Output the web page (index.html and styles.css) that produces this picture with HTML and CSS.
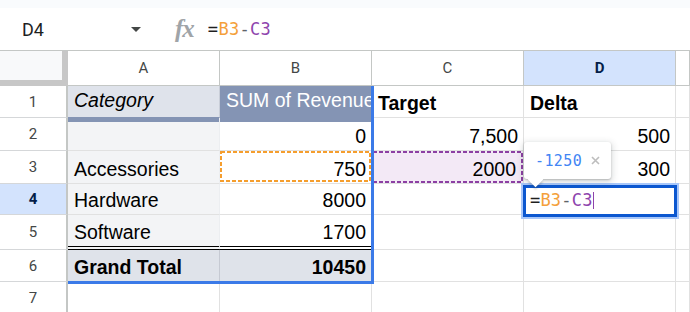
FILE: index.html
```html
<!DOCTYPE html>
<html>
<head>
<meta charset="utf-8">
<link rel="stylesheet" href="styles.css">
</head>
<body>
<div class="top-strip"></div>
<div class="fbar">
  <div class="namebox"><span class="name">D4</span><span class="caret"></span></div>
  <div class="fx">fx</div>
  <div class="formula"><span>=</span><span class="ref-b">B3</span><span class="op">-</span><span class="ref-c">C3</span></div>
</div>
<div class="sheet">
  <div class="corner"></div>
  <div class="ch">A</div><div class="ch">B</div><div class="ch">C</div><div class="ch sel">D</div><div class="ch"></div>

  <div class="rh">1</div>
  <div class="c pv-head">Category</div>
  <div class="c pv-col">SUM of Revenue</div>
  <div class="c b">Target</div>
  <div class="c b">Delta</div>
  <div class="c"></div>

  <div class="rh">2</div>
  <div class="c pv-row band"></div>
  <div class="c num band">0</div>
  <div class="c num">7,500</div>
  <div class="c num">500</div>
  <div class="c"></div>

  <div class="rh">3</div>
  <div class="c pv-row">Accessories</div>
  <div class="c num">750<svg class="dash" width="151" height="32"><rect x="1" y="1" width="149" height="29" fill="none" stroke="#f59e2e" stroke-width="2" stroke-dasharray="4 2"/></svg></div>
  <div class="c num refc">2000<svg class="dash" width="151" height="32"><rect x="1" y="1" width="149" height="30" fill="none" stroke="#8c3fa3" stroke-width="2" stroke-dasharray="4 2"/></svg></div>
  <div class="c num">300</div>
  <div class="c"></div>

  <div class="rh sel">4</div>
  <div class="c pv-row">Hardware</div>
  <div class="c num">8000</div>
  <div class="c"></div>
  <div class="c"></div>
  <div class="c"></div>

  <div class="rh">5</div>
  <div class="c pv-row dbl">Software</div>
  <div class="c num dbl">1700</div>
  <div class="c"></div>
  <div class="c"></div>
  <div class="c"></div>

  <div class="rh">6</div>
  <div class="c total">Grand Total</div>
  <div class="c num total">10450</div>
  <div class="c"></div>
  <div class="c"></div>
  <div class="c"></div>

  <div class="rh">7</div>
  <div class="c"></div>
  <div class="c"></div>
  <div class="c"></div>
  <div class="c"></div>
  <div class="c"></div>

  <div class="range"></div>
  <div class="editor"><span>=</span><span class="ref-b">B3</span><span class="op">-</span><span class="ref-c">C3</span><span class="cursor"></span></div>
  <div class="tip">
    <span class="tip-val">-1250</span>
    <svg class="tip-x" width="9" height="9" viewBox="0 0 9 9"><path d="M1 1L8 8M8 1L1 8" stroke="#bdbdbd" stroke-width="1.6"/></svg>
  </div>
</div>
</body>
</html>
```

FILE: styles.css
```css
* { box-sizing: border-box; }
html, body { margin: 0; padding: 0; }
body {
  width: 690px;
  height: 312px;
  overflow: hidden;
  background: #fff;
  font-family: "Liberation Sans", Arial, sans-serif;
  color: #000;
}
.top-strip { height: 8px; background: #f9fbfd; }
.fbar {
  height: 42px;
  display: flex;
  align-items: center;
  background: #fff;
}
.namebox {
  width: 141px;
  padding-left: 22px;
  display: flex;
  align-items: center;
  font: 18px Roboto, sans-serif;
  color: #1f1f1f;
}
.caret {
  margin-left: auto;
  width: 0;
  height: 0;
  border-left: 5px solid transparent;
  border-right: 5px solid transparent;
  border-top: 5px solid #444746;
}
.fx {
  margin-left: 34px;
  font: italic 700 25px "Liberation Serif", serif;
  color: #a0a4a8;
  letter-spacing: -1px;
}
.formula {
  margin-left: 14px;
  font: 17px "DejaVu Sans Mono", monospace;
  letter-spacing: 0.3px;
  color: #1f1f1f;
}
.ref-b { color: #f4a03a; }
.ref-c { color: #8e44ad; }
.op { color: #5f6368; }

.sheet {
  position: relative;
  height: 262px;
  border-top: 1px solid #c4c7c5;
  display: grid;
  grid-template-columns: 68px 152px 152px 152px 152px 1fr;
  grid-template-rows: 35px 32px 33px 33px 31px 35px 32px 33px;
  overflow: hidden;
}
.corner {
  background: #f8f9fa;
  border-right: 6px solid #c7c7c7;
  border-bottom: 6px solid #c7c7c7;
}
.ch {
  display: flex;
  align-items: center;
  justify-content: center;
  border-right: 1px solid #c4c7c5;
  border-bottom: 1px solid #c4c7c5;
  font: 15px Roboto, sans-serif;
  color: #444746;
}
.ch.sel, .rh.sel {
  background: #d3e3fd;
  color: #041e49;
  font-weight: 700;
}
.rh {
  display: flex;
  align-items: center;
  justify-content: center;
  border-right: 2px solid #c4c7c5;
  border-bottom: 1px solid #d5d7d9;
  font: 15px Roboto, sans-serif;
  color: #444746;
}
.c {
  position: relative;
  display: flex;
  align-items: flex-end;
  padding: 0 5px 3px 6px;
  border-right: 1px solid #e1e1e1;
  border-bottom: 1px solid #e1e1e1;
  font-size: 19.5px;
  line-height: 22px;
  white-space: nowrap;
  overflow: hidden;
}
.num { justify-content: flex-end; }
.b { font-weight: 700; }
.pv-head {
  background: #dfe3eb;
  font-style: italic;
  border-bottom-color: #8494b4;
  border-right-color: #c9ced8;
  padding-bottom: 6px;
}
.pv-col {
  background: #8494b4;
  color: #fff;
  border-bottom-color: #8494b4;
  padding-bottom: 6px;
}
.band { box-shadow: inset 0 4px 0 #8494b4; }
.pv-row { background: #f3f4f6; border-right-color: #eceef1; }
.dbl { border-bottom: 4px double #000; }
.total {
  background: #dfe3ea;
  font-weight: 700;
  border-right-color: #c6cad3;
}
.refc { background: #f3e9f6; padding-right: 7px; }
.dash { position: absolute; left: 0; top: 0; }

.range {
  position: absolute;
  left: 68px;
  top: 35px;
  width: 306px;
  height: 198px;
  border-right: 3px solid #3b7ae8;
  border-bottom: 3px solid #3b7ae8;
}
.editor {
  position: absolute;
  left: 523px;
  top: 134px;
  width: 154px;
  height: 32px;
  background: #fff;
  border: 3px solid #0b57d0;
  box-shadow: 0 0 0 2px #a8c7fa;
  padding: 3px 0 0 4px;
  font: 17px/19px "DejaVu Sans Mono", monospace;
  letter-spacing: 0.2px;
  color: #1f1f1f;
  white-space: nowrap;
}
.cursor {
  display: inline-block;
  width: 0;
  height: 17px;
  border-left: 1.5px solid #8e44ad;
  vertical-align: -3px;
}
.tip {
  position: absolute;
  left: 524px;
  top: 91px;
  width: 87px;
  height: 37px;
  background: #fff;
  border-radius: 3px;
  box-shadow: 0 1px 2px rgba(60,64,67,.3), 0 2px 6px 2px rgba(60,64,67,.15);
  display: flex;
  align-items: center;
  padding-left: 11px;
  z-index: 2;
}
.tip::after {
  content: "";
  position: absolute;
  left: 6px;
  bottom: -6px;
  width: 11px;
  height: 11px;
  background: #fff;
  transform: rotate(45deg);
  box-shadow: 2px 2px 2px rgba(60,64,67,.2);
}
.tip-val {
  font: 15px "DejaVu Sans Mono", monospace;
  letter-spacing: 0.4px;
  color: #4285f4;
}
.tip-x { margin-left: 9px; }
```
